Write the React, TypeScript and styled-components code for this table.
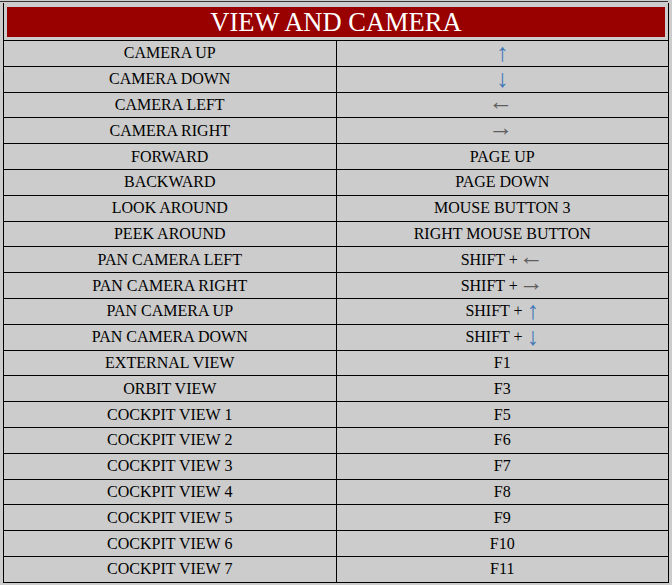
import React from "react";
import styled, { createGlobalStyle } from "styled-components";

const GlobalStyle = createGlobalStyle`
  html, body {
    margin: 0;
    padding: 0;
    background: #cccccc;
  }
  body {
    width: 672px;
    height: 585px;
    overflow: hidden;
    font-family: "Liberation Serif", "Times New Roman", serif;
  }
`;

const Page = styled.div`
  padding-top: 1px;
  background: #cccccc;
`;

const TopRule = styled.div`
  height: 1px;
  background: #333333;
  margin-right: 4px;
`;

const Table = styled.table`
  margin: 1px 0 0 3px;
  width: 666px;
  border-collapse: collapse;
  border-left: 1px solid #000;
  border-right: 1px solid #000;
  background: #cccccc;
  table-layout: fixed;
`;

const HeaderCell = styled.th`
  padding: 4px 3px 3px 3px;
`;

const Banner = styled.div`
  background: #990000;
  color: #ffffff;
  font-family: "Liberation Serif", "Times New Roman", serif;
  font-weight: normal;
  font-size: 26.5px;
  line-height: 30px;
  height: 30px;
  text-align: center;
`;

const Row = styled.tr`
  height: 25.8px;
  border-top: 1px solid #000;
  &:last-child {
    border-bottom: 1px solid #000;
  }
`;

const Cell = styled.td`
  padding: 0;
  text-align: center;
  vertical-align: middle;
  font-size: 16px;
  line-height: 18px;
  color: #000;
  & + & {
    border-left: 1px solid #000;
  }
`;

const Arrow = styled.span<{ $vertical?: boolean }>`
  display: inline-block;
  color: ${(p) => (p.$vertical ? "#3f78b8" : "#5e5e5e")};
  font-family: "Liberation Serif", "Times New Roman", serif;
  font-size: 25px;
  line-height: ${(p) => (p.$vertical ? "18px" : "11px")};
  height: ${(p) => (p.$vertical ? "18px" : "11px")};
  margin-left: ${(p) => (p.$vertical ? "0" : "-3px")};
  vertical-align: top;
`;

type Entry = { action: string; key: React.ReactNode };

const up = <Arrow $vertical>↑</Arrow>;
const down = <Arrow $vertical>↓</Arrow>;
const left = <Arrow>←</Arrow>;
const right = <Arrow>→</Arrow>;

const rows: Entry[] = [
  { action: "CAMERA UP", key: up },
  { action: "CAMERA DOWN", key: down },
  { action: "CAMERA LEFT", key: left },
  { action: "CAMERA RIGHT", key: right },
  { action: "FORWARD", key: "PAGE UP" },
  { action: "BACKWARD", key: "PAGE DOWN" },
  { action: "LOOK AROUND", key: "MOUSE BUTTON 3" },
  { action: "PEEK AROUND", key: "RIGHT MOUSE BUTTON" },
  { action: "PAN CAMERA LEFT", key: <>SHIFT + {left}</> },
  { action: "PAN CAMERA RIGHT", key: <>SHIFT + {right}</> },
  { action: "PAN CAMERA UP", key: <>SHIFT + {up}</> },
  { action: "PAN CAMERA DOWN", key: <>SHIFT + {down}</> },
  { action: "EXTERNAL VIEW", key: "F1" },
  { action: "ORBIT VIEW", key: "F3" },
  { action: "COCKPIT VIEW 1", key: "F5" },
  { action: "COCKPIT VIEW 2", key: "F6" },
  { action: "COCKPIT VIEW 3", key: "F7" },
  { action: "COCKPIT VIEW 4", key: "F8" },
  { action: "COCKPIT VIEW 5", key: "F9" },
  { action: "COCKPIT VIEW 6", key: "F10" },
  { action: "COCKPIT VIEW 7", key: "F11" },
];

export default function App() {
  return (
    <Page>
      <GlobalStyle />
      <TopRule />
      <Table>
        <colgroup>
          <col style={{ width: "50%" }} />
          <col style={{ width: "50%" }} />
        </colgroup>
        <thead>
          <tr>
            <HeaderCell colSpan={2}>
              <Banner>VIEW AND CAMERA</Banner>
            </HeaderCell>
          </tr>
        </thead>
        <tbody>
          {rows.map((r) => (
            <Row key={r.action}>
              <Cell>{r.action}</Cell>
              <Cell>{r.key}</Cell>
            </Row>
          ))}
        </tbody>
      </Table>
    </Page>
  );
}
